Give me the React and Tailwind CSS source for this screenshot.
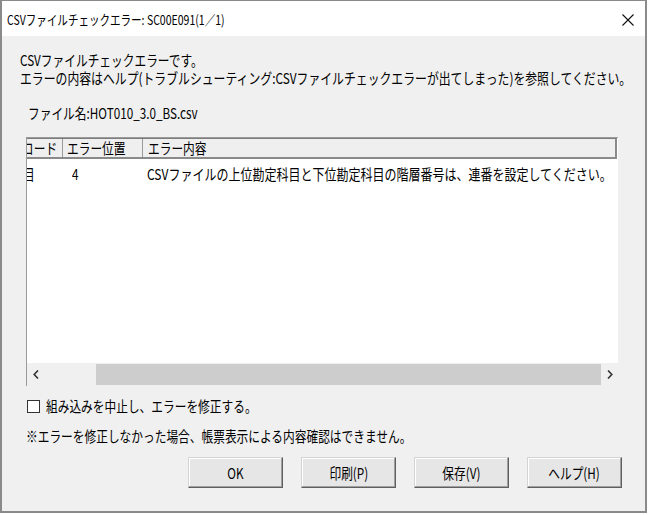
import React from "react";

const FONT = { fontFamily: '"Noto Sans CJK JP", "Noto Sans", sans-serif' };

function T({ children, className = "scale-x-[0.78]" }) {
  return (
    <span className={`inline-block origin-left whitespace-nowrap ${className}`}>
      {children}
    </span>
  );
}

function Btn({ children }) {
  return (
    <button className="w-[95px] h-[31px] bg-[#e6e6e6] border border-t-[#d4d4d4] border-l-[#d4d4d4] border-r-[#5f5f5f] border-b-[#5f5f5f] shadow-[inset_-1px_-1px_0_#a0a0a0,inset_1px_1px_0_#ffffff] flex items-center justify-center text-[15px] leading-[18px] text-black">
      <span className="inline-block scale-x-[0.78] whitespace-nowrap">{children}</span>
    </button>
  );
}

export default function App() {
  return (
    <div className="w-[649px] h-[515px] bg-white overflow-hidden" style={FONT}>
      <div className="w-[647px] h-[513px] border-2 border-t border-[#8a8a8a] bg-[#f0f0f0] flex flex-col text-black overflow-hidden">
        {/* title bar */}
        <div className="h-[35px] bg-white flex items-center justify-between pl-[5px] pr-[11px] shrink-0">
          <div className="text-[13.5px] leading-[18px] pt-[1px]">
            <T>CSVファイルチェックエラー: SC00E091(1／1)</T>
          </div>
          <svg width="12" height="12" viewBox="0 0 12 12" className="mt-[3px]">
            <path d="M0.5 0.5 L11.5 11.5 M11.5 0.5 L0.5 11.5" stroke="#111" strokeWidth="1.1" fill="none" />
          </svg>
        </div>

        {/* body */}
        <div className="flex-1 flex flex-col pl-[18px] text-[15px] leading-[18px]">
          <div className="mt-[15px] h-[18px]">
            <T>CSVファイルチェックエラーです。</T>
          </div>
          <div className="h-[18px]">
            <T className="scale-x-[0.79]">エラーの内容はヘルプ(トラブルシューティング:CSVファイルチェックエラーが出てしまった)を参照してください。</T>
          </div>
          <div className="mt-[17px] h-[18px] ml-[8px]">
            <T>ファイル名:HOT010_3.0_BS.csv</T>
          </div>

          {/* list view */}
          <div className="mt-[15px] ml-[6px] w-[592px] h-[249px] bg-white border-l border-t border-[#9a9a9a] flex flex-col overflow-hidden">
            {/* header */}
            <div className="h-[21px] flex bg-[#efefef] border-t border-b-2 border-r-2 border-t-[#7d7d7d] border-b-[#8a8a8a] border-r-[#8a8a8a] mr-[1px] shrink-0">
              <div className="w-[35px] shrink-0 overflow-hidden flex items-center">
                <span className="-ml-[5px] shrink-0"><T>コード</T></span>
              </div>
              <div className="w-[80px] shrink-0 border-l border-[#9a9a9a] flex items-center pl-[4px]">
                <T>エラー位置</T>
              </div>
              <div className="flex-1 min-w-0 border-l border-[#9a9a9a] flex items-center pl-[5px]">
                <T>エラー内容</T>
              </div>
            </div>
            {/* row */}
            <div className="h-[18px] mt-[6px] flex">
              <div className="w-[35px] shrink-0 overflow-hidden flex items-center">
                <span className="-ml-[4px] shrink-0"><T>目</T></span>
              </div>
              <div className="w-[80px] shrink-0 flex items-center pl-[10px]">
                <T>4</T>
              </div>
              <div className="flex-1 min-w-0 flex items-center pl-[5px]">
                <T className="scale-x-[0.8]">CSVファイルの上位勘定科目と下位勘定科目の階層番号は、連番を設定してください。</T>
              </div>
            </div>
            <div className="flex-1" />
            {/* horizontal scrollbar */}
            <div className="h-[23px] flex bg-[#f0f0f0] shrink-0">
              <div className="w-[17px] shrink-0 flex items-center justify-center">
                <svg width="6" height="9" viewBox="0 0 6 9">
                  <path d="M5 0.5 L1.2 4.5 L5 8.5" stroke="#333" strokeWidth="1.6" fill="none" />
                </svg>
              </div>
              <div className="flex-1 flex justify-end py-[1px]">
                <div className="w-[505px] h-full bg-[#cdcdcd]" />
              </div>
              <div className="w-[17px] shrink-0 flex items-center justify-center">
                <svg width="6" height="9" viewBox="0 0 6 9">
                  <path d="M1 0.5 L4.8 4.5 L1 8.5" stroke="#333" strokeWidth="1.6" fill="none" />
                </svg>
              </div>
            </div>
          </div>

          {/* checkbox */}
          <div className="mt-[11px] ml-[7px] h-[18px] flex items-center gap-[6px]">
            <div className="w-[13px] h-[13px] bg-white border border-[#333]" />
            <T>組み込みを中止し、エラーを修正する。</T>
          </div>
          <div className="mt-[12px] ml-[6px] h-[18px]">
            <T>※エラーを修正しなかった場合、帳票表示による内容確認はできません。</T>
          </div>

          {/* buttons */}
          <div className="mt-[12px] flex gap-[18px] pl-[168px]">
            <Btn>OK</Btn>
            <Btn>印刷(P)</Btn>
            <Btn>保存(V)</Btn>
            <Btn>ヘルプ(H)</Btn>
          </div>
        </div>
      </div>
    </div>
  );
}
